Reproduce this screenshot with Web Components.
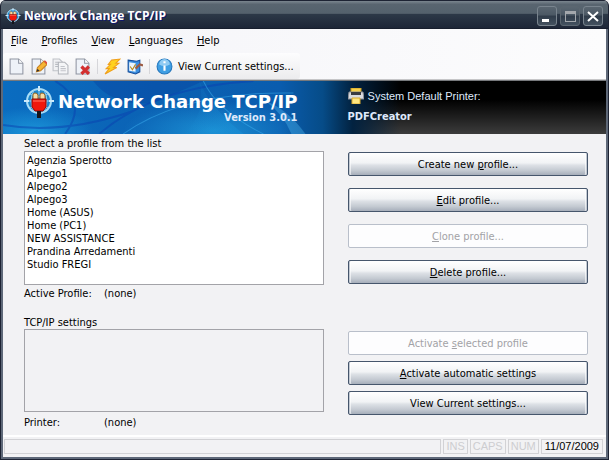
<!DOCTYPE html>
<html lang="en">
<head>
<meta charset="utf-8">
<title>Network Change TCP/IP</title>
<style>
  body {
    margin: 0;
    background: #f2f2f4;
    color: #000;
    font: 11px/13px "DejaVu Sans Condensed", "DejaVu Sans", sans-serif;
  }
  u { text-underline-offset: 1px; }
</style>
</head>
<body>

<nc-window>
  <nc-title-bar slot="title">Network Change TCP/IP</nc-title-bar>

  <nc-menu-bar>
    <nc-menu><u>F</u>ile</nc-menu>
    <nc-menu><u>P</u>rofiles</nc-menu>
    <nc-menu><u>V</u>iew</nc-menu>
    <nc-menu><u>L</u>anguages</nc-menu>
    <nc-menu><u>H</u>elp</nc-menu>
  </nc-menu-bar>

  <nc-toolbar></nc-toolbar>

  <nc-banner version="Version 3.0.1" printer="PDFCreator">Network Change TCP/IP</nc-banner>

  <nc-panels>
    <nc-profile-list active="(none)"></nc-profile-list>
    <nc-actions class="wide">
      <nc-button>Create new <u>p</u>rofile...</nc-button>
      <nc-button><u>E</u>dit profile...</nc-button>
      <nc-button disabled><u>C</u>lone profile...</nc-button>
      <nc-button><u>D</u>elete profile...</nc-button>
    </nc-actions>
    <nc-settings printer="(none)"></nc-settings>
    <nc-actions>
      <nc-button disabled>Activate <u>s</u>elected profile</nc-button>
      <nc-button><u>A</u>ctivate automatic settings</nc-button>
      <nc-button>View Current settings...</nc-button>
    </nc-actions>
  </nc-panels>

  <nc-status-bar date="11/07/2009"></nc-status-bar>
</nc-window>

<script>
// Logo: red plug in front of a globe, shared by the title bar and the banner
const LOGO = `
  <svg viewBox="0 0 32 32" aria-hidden="true">
    <circle cx="16" cy="15" r="12" fill="#1c86cc" stroke="#a9dcf6" stroke-width="2"/>
    <path d="M16 3v24M4 15h24M7 8q9 5 18 0M7 22q9-5 18 0M11 4q-6 11 0 22M21 4q6 11 0 22" fill="none" stroke="#8ccdf2" stroke-width="1"/>
    <path d="M16 0v5M1 15h5M26 15h5" stroke="#cdeafa" stroke-width="2"/>
    <path d="M10 14V9q0-2 2-2t3 2v5zM17 14V9q0-2 2-2t3 2v5z" fill="#f6dca4" stroke="#9a6420"/>
    <path d="M9 13h14v8l-3 4h-8l-3-4z" fill="#f0180c" stroke="#8c0a06"/>
    <path d="M10 15h12" stroke="#ff7a66"/>
    <path d="M14 25h4v7h-4z" fill="#15151c"/>
  </svg>`;

const SHEET = `<path d="M2 1h8l4 4v10H2z" fill="#eef2f8" stroke="#9095a2"/><path d="M10 1v4h4" fill="#fff" stroke="#9095a2"/>`;

const ICONS = {
  new: SHEET,
  edit: SHEET + `<path d="M6 13l1-4 6-6 3 3-6 6z" fill="#f7b533" stroke="#c98424"/><path d="M13 3l1-1 2 2v2z" fill="#e04a3a"/><path d="M6 13l1-3 2 2z" fill="#333"/>`,
  copy: `<path d="M1 1h6l3 3v8H1z" fill="#f0f1f3" stroke="#bfc2c8"/><path d="M3 4h3M3 6h3M3 8h3" stroke="#b9bcc2"/><path d="M6 4h6l3 3v8H6z" fill="#f4f5f7" stroke="#b2b5bb"/><path d="M8 8h4M8 10h5M8 12h5" stroke="#c2c4ca"/>`,
  delete: SHEET + `<path d="M7 8l7 7M14 8l-7 7" stroke="#d22f2f" stroke-width="3"/>`,
  bolt: `<path d="M7 2l8-1-4 4h3l-5 4h3L1 15l4-5H2l4-4H4z" fill="#ffd21e" stroke="#f0a01c"/>`,
  check: `<path d="M2 2l8 1 3-1v11l-4 2-7-2z" fill="#3a8fe0" stroke="#174f9c"/><path d="M3 4l6 1v8l-6-1z" fill="#eaf4fd"/><path d="M4 8l2 3 3-5" fill="none" stroke="#b98a18" stroke-width="1"/><path d="M9 10l4-4 3 1" fill="none" stroke="#9c5b44" stroke-width="2"/>`,
  info: `<circle cx="8" cy="8" r="7" fill="#3f9fe4" stroke="#2477bd"/><path d="M3 6a5 5 0 0 1 10 0q-5 3-10 0z" fill="#8fcbf3"/><path d="M7 7h2v5H7zM7 3h2v2H7z" fill="#fff"/>`
};

const icon = (name) => `<svg viewBox="0 0 16 16" aria-hidden="true">${ICONS[name]}</svg>`;

/**
 * Window frame: title bar on top, content stacked below it.
 */
class NcWindow extends HTMLElement {
  constructor() {
    super();
    this.attachShadow({ mode: "open" });
  }

  connectedCallback() {
    this.shadowRoot.innerHTML = `
    <style>
      :host {
        display: flex;
        flex-direction: column;
        box-sizing: border-box;
        min-height: 100vh;
        border: solid #1d2333;
        border-width: 0 1px 1px;
        border-radius: 6px 6px 0 0;
        overflow: hidden;
        background: #1d2333;
      }
      .client {
        flex: 1;
        display: flex;
        flex-direction: column;
        border: 2px solid #5e6878;
        border-top: 0;
        background: #f2f2f4;
      }
    </style>
    <slot name="title"></slot>
    <div class="client"><slot></slot></div>`;
  }
}

/**
 * Title bar with logo, caption and the three window buttons.
 */
class NcTitleBar extends HTMLElement {
  constructor() {
    super();
    this.attachShadow({ mode: "open" });
  }

  connectedCallback() {
    this.shadowRoot.innerHTML = `
    <style>
      :host {
        display: flex;
        align-items: center;
        gap: 3px;
        box-sizing: border-box;
        height: 29px;
        padding: 3px 5px 1px 4px;
        border-top: 1px solid #1d2333;
        background: linear-gradient(#7b868f, #596570 12%, #54616c 44%, #2c3847 48%, #1e2738 95%, #141a28);
      }
      svg { width: 16px; height: 16px; }
      h1 {
        flex: 1;
        margin: 0;
        color: #fff;
        font: bold 12px/18px "Open Sans", sans-serif;
        text-shadow: 1px 1px #10186c;
      }
      button {
        width: 20px;
        height: 20px;
        padding: 0;
        border: 1px solid #79848e;
        border-radius: 3px;
        background: linear-gradient(#5a6671, #4b5864 45%, #2f3b49 50%, #445260);
      }
      button svg { display: block; width: 18px; height: 18px; }
      button:disabled { border-color: #5b6670; }
      .buttons { display: flex; gap: 3px; }
    </style>
    ${LOGO}
    <h1><slot></slot></h1>
    <div class="buttons">
      <button aria-label="Minimize"><svg viewBox="0 0 18 18"><path d="M4 12h7v3H4z" fill="#fff"/></svg></button>
      <button aria-label="Maximize" disabled><svg viewBox="0 0 18 18"><path d="M4 4h11v11H4zM5 7v7h9V7z" fill="#a3a7ac" fill-rule="evenodd"/></svg></button>
      <button aria-label="Close"><svg viewBox="0 0 18 18"><path d="M4 5l10 9M14 5L4 14" stroke="#fff" stroke-width="2"/></svg></button>
    </div>`;
  }
}

/**
 * Menu strip.
 */
class NcMenuBar extends HTMLElement {
  constructor() {
    super();
    this.attachShadow({ mode: "open" });
  }

  connectedCallback() {
    this.setAttribute("role", "menubar");
    this.shadowRoot.innerHTML = `
    <style>
      :host {
        display: flex;
        gap: 14px;
        padding: 5px 8px 6px;
        background: linear-gradient(90deg, #f4f4f8, #fcfcfd);
      }
    </style>
    <slot></slot>`;
  }
}

class NcMenu extends HTMLElement {
  constructor() {
    super();
    this.attachShadow({ mode: "open" });
  }

  connectedCallback() {
    this.shadowRoot.innerHTML = `
    <style>
      :host { display: block; }
      button {
        display: block;
        padding: 0;
        border: 0;
        background: none;
        color: inherit;
        font: inherit;
      }
    </style>
    <button role="menuitem"><slot></slot></button>`;
  }
}

/**
 * Toolbar with icon buttons and a labelled one at the end.
 */
class NcToolbar extends HTMLElement {
  constructor() {
    super();
    this.attachShadow({ mode: "open" });
  }

  connectedCallback() {
    this.shadowRoot.innerHTML = `
    <style>
      :host {
        display: block;
        border-bottom: 1px solid #c6c6c8;
        background: linear-gradient(90deg, #f4f4f8, #fcfcfd);
      }
      .strip {
        display: flex;
        align-items: center;
        gap: 5px;
        box-sizing: border-box;
        width: max-content;
        height: 26px;
        padding: 0 6px 0 5px;
        border-radius: 3px;
        background: linear-gradient(#fdfdfe, #ececee);
      }
      button {
        display: flex;
        align-items: center;
        gap: 5px;
        padding: 0;
        border: 0;
        background: none;
        color: inherit;
        font: inherit;
      }
      svg { width: 17px; height: 17px; }
      i { width: 1px; height: 15px; margin: 0 1px; background: #d6d6da; }
    </style>
    <div class="strip" role="toolbar">
      <button aria-label="New profile">${icon("new")}</button>
      <button aria-label="Edit profile">${icon("edit")}</button>
      <button aria-label="Clone profile" disabled>${icon("copy")}</button>
      <button aria-label="Delete profile">${icon("delete")}</button>
      <i></i>
      <button aria-label="Activate profile">${icon("bolt")}</button>
      <button aria-label="Automatic settings">${icon("check")}</button>
      <i></i>
      <button>${icon("info")}View Current settings...</button>
    </div>`;
  }
}

/**
 * Blue banner with the product name and the default printer.
 */
class NcBanner extends HTMLElement {
  constructor() {
    super();
    this.attachShadow({ mode: "open" });
  }

  connectedCallback() {
    this.shadowRoot.innerHTML = `
    <style>
      :host {
        position: relative;
        display: grid;
        grid-template-columns: 5fr 4fr;
        column-gap: 24px;
        box-sizing: border-box;
        height: 54px;
        padding: 0 18px 0 20px;
        border-top: 1px solid #77797c;
        color: #dfe9fb;
        background:
          linear-gradient(90deg, #0a6cc0, #0b62b4 25%, #0a5cae 46%, #064c88 53%, #022240 58%, #0000 66%),
          linear-gradient(#000 35%, #3c3c3c);
      }
      .waves { position: absolute; inset: 0; width: 100%; height: 100%; }
      .product, .printer { position: relative; }
      .product { display: flex; gap: 3px; }
      .product svg { width: 32px; height: 32px; margin-top: 5px; }
      .name { padding-top: 10px; text-align: right; }
      h2 { margin: 0; color: #fff; font: bold 18px/22px "DejaVu Sans", sans-serif; white-space: nowrap; }
      .name small { display: block; font: bold 11px/10px "DejaVu Sans Condensed", sans-serif; }
      .printer { padding-top: 7px; font: 11px/16px "Liberation Sans", sans-serif; }
      .printer div { display: flex; gap: 4px; }
      .printer svg { width: 16px; height: 16px; }
      .printer strong { display: block; margin-top: 5px; font: bold 11px/16px "DejaVu Sans Condensed", sans-serif; }
    </style>
    <svg class="waves" viewBox="0 0 602 53" preserveAspectRatio="none" aria-hidden="true">
      <defs>
        <linearGradient id="fade" x1="0" x2="1">
          <stop offset="0" stop-color="#1d9ae0" stop-opacity="0"/>
          <stop offset="1" stop-color="#1d9ae0" stop-opacity=".7"/>
        </linearGradient>
        <radialGradient id="glow">
          <stop offset="0" stop-color="#22a4e2" stop-opacity=".7"/>
          <stop offset="1" stop-color="#22a4e2" stop-opacity="0"/>
        </radialGradient>
      </defs>
      <ellipse cx="210" cy="50" rx="90" ry="30" fill="url(#glow)"/>
      <ellipse cx="30" cy="50" rx="60" ry="24" fill="url(#glow)"/>
      <path d="M90 0h110l-50 22q-40 4-60-22z" fill="#063c9c" opacity=".35"/>
      <path d="M196 0q10 26 44 53h-60q24-20 16-53z" fill="url(#fade)" opacity=".5"/>
      <path d="M262 20q22 8 40 33h-14q-8-20-26-33z" fill="#4cb4ee" opacity=".4"/>
      <path d="M52 0q34 20 10 53M96 53Q150 6 250 0M0 44q60 10 130-14" fill="none" stroke="#0a3fb0" stroke-width="2" opacity=".5"/>
      <path d="M120 53Q180 10 290 12M200 0q14 30 60 53" fill="none" stroke="#3cb0f0" opacity=".5"/>
    </svg>
    <div class="product">
      ${LOGO}
      <div class="name">
        <h2><slot></slot></h2>
        <small>${this.getAttribute("version")}</small>
      </div>
    </div>
    <div class="printer">
      <div>
        <svg viewBox="0 0 16 16" aria-hidden="true">
          <path d="M3 0h10v5H3z" fill="#f5d04a" stroke="#c99a20"/>
          <path d="M1 4h14l1 7H0z" fill="#d9dbe0" stroke="#8b8e96"/>
          <path d="M3 4h10v3H3z" fill="#3a3c42"/>
          <path d="M4 10h8v6H4z" fill="#ffe680" stroke="#d8a82c"/>
        </svg>
        <span>System Default Printer:</span>
      </div>
      <strong>${this.getAttribute("printer")}</strong>
    </div>`;
  }
}

/**
 * Two-column grid: lists on the left, their actions on the right.
 */
class NcPanels extends HTMLElement {
  constructor() {
    super();
    this.attachShadow({ mode: "open" });
  }

  connectedCallback() {
    this.shadowRoot.innerHTML = `
    <style>
      :host {
        flex: 1;
        display: grid;
        grid-template-columns: 5fr 4fr;
        align-content: start;
        gap: 16px 24px;
        padding: 3px 18px 4px 21px;
      }
    </style>
    <slot></slot>`;
  }
}

/**
 * List of the saved profiles and the name of the active one.
 */
class NcProfileList extends HTMLElement {
  static profiles = [
    "Agenzia Sperotto", "Alpego1", "Alpego2", "Alpego3", "Home (ASUS)",
    "Home (PC1)", "NEW ASSISTANCE", "Prandina Arredamenti", "Studio FREGI"
  ];

  constructor() {
    super();
    this.attachShadow({ mode: "open" });
  }

  connectedCallback() {
    const options = NcProfileList.profiles.map((name) => `<option>${name}</option>`).join("");
    this.shadowRoot.innerHTML = `
    <style>
      :host { display: block; }
      label { display: block; margin-bottom: 1px; }
      select {
        display: block;
        box-sizing: border-box;
        width: 100%;
        height: 134px;
        padding: 2px 0;
        border: 1px solid #a3a3a8;
        border-radius: 0;
        outline: 0;
        background: #fff;
        color: inherit;
        font: inherit;
        overflow: hidden;
      }
      option { min-height: 13px; padding: 0 2px; line-height: 13px; }
      .row { display: flex; margin-top: 2px; }
      .row span { width: 80px; }
    </style>
    <label for="profiles">Select a profile from the list</label>
    <select id="profiles" size="10">${options}</select>
    <div class="row"><span>Active Profile:</span><output>${this.getAttribute("active")}</output></div>`;
  }
}

/**
 * Read-only details of the selected profile.
 */
class NcSettings extends HTMLElement {
  constructor() {
    super();
    this.attachShadow({ mode: "open" });
  }

  connectedCallback() {
    this.shadowRoot.innerHTML = `
    <style>
      :host { display: block; }
      label { display: block; }
      textarea {
        display: block;
        box-sizing: border-box;
        width: 100%;
        height: 83px;
        border: 1px solid #a3a3a8;
        outline: 0;
        resize: none;
        background: #f2f2f4;
        font: inherit;
      }
      .row { display: flex; margin-top: 4px; }
      .row span { width: 80px; }
    </style>
    <label for="settings">TCP/IP settings</label>
    <textarea id="settings" readonly></textarea>
    <div class="row"><span>Printer:</span><output>${this.getAttribute("printer")}</output></div>`;
  }
}

/**
 * Column of buttons. Class "wide" spreads them further apart.
 */
class NcActions extends HTMLElement {
  constructor() {
    super();
    this.attachShadow({ mode: "open" });
  }

  connectedCallback() {
    this.shadowRoot.innerHTML = `
    <style>
      :host {
        display: flex;
        flex-direction: column;
        gap: 6px;
        padding-top: 15px;
      }
      :host(.wide) { gap: 12px; }
    </style>
    <slot></slot>`;
  }
}

class NcButton extends HTMLElement {
  constructor() {
    super();
    this.attachShadow({ mode: "open" });
  }

  connectedCallback() {
    this.shadowRoot.innerHTML = `
    <style>
      :host { display: block; }
      button {
        display: block;
        box-sizing: border-box;
        width: 100%;
        height: 24px;
        padding: 0;
        border: 1px solid #46566c;
        border-radius: 2px;
        background: linear-gradient(#fff, #f1f3f5 45%, #dde1e6 55%, #c3c9d1 80%, #a6aeba);
        box-shadow: inset 1px 0 #c3cad3, inset -1px 0 #c3cad3, inset 2px 0 #fff9, inset -2px 0 #fff9;
        color: #000;
        font: inherit;
      }
      button:disabled {
        border-color: #b9bfca;
        background: #fdfdfe;
        box-shadow: none;
        color: #a2a2a6;
      }
    </style>
    <button ${this.hasAttribute("disabled") ? "disabled" : ""}><slot></slot></button>`;
  }
}

/**
 * Status bar: message pane, keyboard state and the date.
 */
class NcStatusBar extends HTMLElement {
  constructor() {
    super();
    this.attachShadow({ mode: "open" });
  }

  connectedCallback() {
    this.shadowRoot.innerHTML = `
    <style>
      :host {
        display: flex;
        gap: 2px;
        padding: 2px 3px 3px 1px;
        border-top: 2px solid #fff;
        color: #cdcdd0;
        font: 11px/13px "Liberation Sans", sans-serif;
      }
      span { height: 13px; padding: 0 2px; border: 1px solid #d2d2d5; }
      .message { flex: 1; }
      .date { padding: 0 3px; color: #000; }
    </style>
    <span class="message"></span>
    <span>INS</span>
    <span>CAPS</span>
    <span>NUM</span>
    <span class="date">${this.getAttribute("date")}</span>`;
  }
}

customElements.define("nc-window", NcWindow);
customElements.define("nc-title-bar", NcTitleBar);
customElements.define("nc-menu-bar", NcMenuBar);
customElements.define("nc-menu", NcMenu);
customElements.define("nc-toolbar", NcToolbar);
customElements.define("nc-banner", NcBanner);
customElements.define("nc-panels", NcPanels);
customElements.define("nc-profile-list", NcProfileList);
customElements.define("nc-settings", NcSettings);
customElements.define("nc-actions", NcActions);
customElements.define("nc-button", NcButton);
customElements.define("nc-status-bar", NcStatusBar);
</script>
</body>
</html>
